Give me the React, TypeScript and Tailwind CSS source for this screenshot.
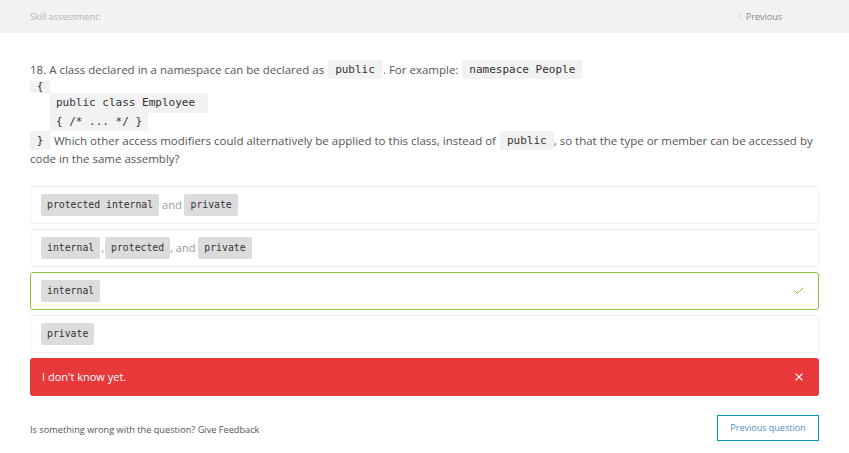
import { Check, X, ChevronLeft } from 'lucide-react'

const sans = "font-['Open_Sans','Noto_Sans',sans-serif]"
const mono = "font-['DejaVu_Sans_Mono',monospace]"

function Code({ children, dark }: { children: React.ReactNode; dark?: boolean }) {
  return (
    <code
      className={`${mono} rounded-[2px] text-[#333] ${dark ? 'bg-[#dcdcdc] text-[9.8px] px-[6px] py-[4px]' : 'bg-[#f2f2f2] text-[11px] px-[7px] py-[3px]'}`}
    >
      {children}
    </code>
  )
}

function Option({ children, correct }: { children: React.ReactNode; correct?: boolean }) {
  return (
    <div
      className={`h-[38px] rounded-[3px] border flex items-center justify-between pl-[10px] pr-[13px] text-[11px] text-[#999] ${correct ? 'border-[#8cc63f]' : 'border-[#efefef]'}`}
    >
      <div className="flex items-center whitespace-pre">{children}</div>
      {correct && <Check size={12} strokeWidth={2} className="text-[#8cc63f]" />}
    </div>
  )
}

export default function App() {
  return (
    <div className={`w-[849px] h-[453px] bg-white ${sans}`}>
      {/* Header */}
      <div className="h-[33px] bg-[#f2f2f2] flex items-center justify-between pl-[30px] pr-[67px]">
        <span className="text-[9px] text-[#b3b3b3]">Skill assessment:</span>
        <span className="flex items-center text-[9px] text-[#888]">
          <ChevronLeft size={13} strokeWidth={1.2} className="text-[#bbb] -mr-[1px]" />
          Previous
        </span>
      </div>

      <div className="px-[30px] pt-[26px]">
        {/* Question */}
        <div className="text-[11.5px] leading-[18px] text-[#555]">
          <div className="h-[21px] flex items-center whitespace-pre">
            18. A class declared in a namespace can be declared as <span className="ml-[1px]"><Code>public</Code></span>
            <span className="ml-[1px]">. For example: </span>
            <span className="ml-[1px]"><Code>namespace People</Code></span>
          </div>
          <div className="h-[13px] flex items-center">
            <code className={`${mono} text-[11px] bg-[#f2f2f2] text-[#333] h-[12px] w-[20px] flex items-center justify-center`}>{'{'}</code>
          </div>
          <div className="h-[20px] pl-[20px] flex items-center">
            <code className={`${mono} text-[11px] bg-[#f2f2f2] text-[#333] h-[20px] pl-[6px] w-[158px] flex items-center whitespace-pre`}>public class Employee</code>
          </div>
          <div className="h-[18px] pl-[20px] flex items-center">
            <code className={`${mono} text-[11px] bg-[#f2f2f2] text-[#333] h-[18px] pl-[6px] w-[98px] flex items-center whitespace-pre`}>{'{ /* ... */ }'}</code>
          </div>
          <div className="h-[19px] flex items-center whitespace-pre">
            <code className={`${mono} text-[11px] bg-[#f2f2f2] text-[#333] h-[19px] w-[20px] flex items-center justify-center`}>{'}'}</code>
            <span className="ml-[1px]"> Which other access modifiers could alternatively be applied to this class, instead of </span>
            <span className="ml-[1px]"><Code>public</Code></span>
            <span>, so that the type or member can be accessed by</span>
          </div>
          <div className="leading-[18px]">code in the same assembly?</div>
        </div>

        {/* Options */}
        <div className="mt-[18px] flex flex-col gap-[5px]">
          <Option>
            <Code dark>protected internal</Code> and <Code dark>private</Code>
          </Option>
          <Option>
            <Code dark>internal</Code><span className="mx-[1px]">,</span><Code dark>protected</Code>, and <Code dark>private</Code>
          </Option>
          <Option correct>
            <Code dark>internal</Code>
          </Option>
          <Option>
            <Code dark>private</Code>
          </Option>
          <div className="h-[38px] rounded-[3px] bg-[#e8393a] flex items-center justify-between pl-[12px] pr-[14px] text-[11px] text-white">
            <span>I don't know yet.</span>
            <X size={12} strokeWidth={2.2} />
          </div>
        </div>

        {/* Footer */}
        <div className="mt-[19px] flex items-center justify-between">
          <span className="text-[9.2px] text-[#555] mt-[3px]">Is something wrong with the question? Give Feedback</span>
          <button className="h-[26px] w-[102px] border border-[#0a8fc4] text-[9px] text-[#4a90c8] bg-white">
            Previous question
          </button>
        </div>
      </div>
    </div>
  )
}
